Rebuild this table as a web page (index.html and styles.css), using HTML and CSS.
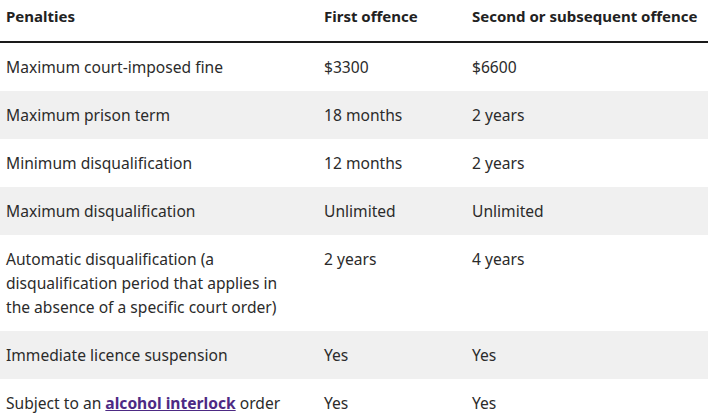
FILE: index.html
```html
<!DOCTYPE html>
<html lang="en">
<head>
<meta charset="utf-8">
<link rel="stylesheet" href="styles.css">
</head>
<body>
<table class="penalties">
  <colgroup>
    <col class="c1"><col class="c2"><col class="c3">
  </colgroup>
  <thead>
    <tr><th>Penalties</th><th>First offence</th><th>Second or subsequent offence</th></tr>
  </thead>
  <tbody>
    <tr><td>Maximum court-imposed fine</td><td>$3300</td><td>$6600</td></tr>
    <tr><td>Maximum prison term</td><td>18 months</td><td>2 years</td></tr>
    <tr><td>Minimum disqualification</td><td>12 months</td><td>2 years</td></tr>
    <tr><td>Maximum disqualification</td><td>Unlimited</td><td>Unlimited</td></tr>
    <tr><td>Automatic disqualification (a disqualification period that applies in the absence of a specific court order)</td><td>2 years</td><td>4 years</td></tr>
    <tr><td>Immediate licence suspension</td><td>Yes</td><td>Yes</td></tr>
    <tr><td>Subject to an <a class="link" href="#">alcohol interlock</a> order</td><td>Yes</td><td>Yes</td></tr>
  </tbody>
</table>
</body>
</html>
```
FILE: styles.css
```css
html, body {
  margin: 0;
  padding: 0;
  background: #fff;
}
body {
  font-family: "Noto Sans", "Liberation Sans", sans-serif;
  font-size: 15.6px;
  color: #2b2b2b;
  overflow: hidden;
}
.penalties {
  border-collapse: collapse;
  table-layout: fixed;
  width: 708px;
}
.c1 { width: 318px; }
.c2 { width: 148px; }
.c3 { width: 242px; }
.penalties th {
  text-align: left;
  font-size: 15px;
  font-weight: 700;
  line-height: 24px;
  padding: 4px 6px 13px;
  border-bottom: 2px solid #1a1a1a;
  color: #222;
  white-space: nowrap;
}
.penalties td {
  vertical-align: top;
  line-height: 24px;
  padding: 12px 6px;
}
.penalties td:first-child {
  padding-right: 26px;
}
.penalties tbody tr:nth-child(even) td {
  background: #f0f0f0;
}
.link {
  color: #4d2a84;
  font-weight: 700;
  text-decoration: underline;
}
```
